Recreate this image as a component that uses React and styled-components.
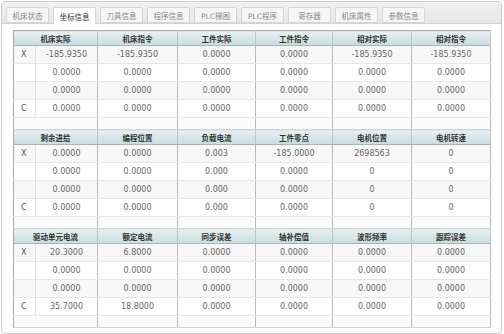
import React from 'react';
import styled, { createGlobalStyle } from 'styled-components';

const GlobalStyle = createGlobalStyle`
	html, body {
		margin: 0;
		padding: 0;
		background: #fff;
	}

	body {
		font-family: "DejaVu Sans", "Noto Sans CJK SC", sans-serif;
	}
`;

const TABS = ['机床状态', '坐标信息', '刀具信息', '程序信息', 'PLC梯图', 'PLC程序', '寄存器', '机床属性', '参数信息'];

const BLOCKS = [
	{
		heads: ['机床实际', '机床指令', '工件实际', '工件指令', '相对实际', '相对指令'],
		rows: [
			['X', '-185.9350', '-185.9350', '0.0000', '0.0000', '-185.9350', '-185.9350'],
			['', '0.0000', '0.0000', '0.0000', '0.0000', '0.0000', '0.0000'],
			['', '0.0000', '0.0000', '0.0000', '0.0000', '0.0000', '0.0000'],
			['C', '0.0000', '0.0000', '0.0000', '0.0000', '0.0000', '0.0000'],
		],
	},
	{
		heads: ['剩余进给', '编程位置', '负载电流', '工件零点', '电机位置', '电机转速'],
		rows: [
			['X', '0.0000', '0.0000', '0.003', '-185.0000', '2698563', '0'],
			['', '0.0000', '0.0000', '0.000', '0.0000', '0', '0'],
			['', '0.0000', '0.0000', '0.000', '0.0000', '0', '0'],
			['C', '0.0000', '0.0000', '0.000', '0.0000', '0', '0'],
		],
	},
	{
		heads: ['驱动单元电流', '额定电流', '同步误差', '轴补偿值', '波形频率', '跟踪误差'],
		rows: [
			['X', '20.3000', '6.8000', '0.0000', '0.0000', '0.0000', '0.0000'],
			['', '0.0000', '0.0000', '0.0000', '0.0000', '0.0000', '0.0000'],
			['', '0.0000', '0.0000', '0.0000', '0.0000', '0.0000', '0.0000'],
			['C', '35.7000', '18.8000', '0.0000', '0.0000', '0.0000', '0.0000'],
		],
	},
];

const COL_WIDTHS = [22, 62, 80, 78, 77, 79, 79];

const Page = styled.div`
	width: 504px;
	height: 334px;
	padding: 1px 2px 2px 1px;
	box-sizing: border-box;
`;

const Panel = styled.div`
	height: 100%;
	border: 1px solid #cdcdcd;
	border-radius: 4px;
	background: #fff;
	display: flex;
	flex-direction: column;
	overflow: hidden;
`;

const TabBar = styled.div`
	display: flex;
	align-items: flex-end;
	gap: 4px;
	height: 21px;
	padding: 0 4px;
	background: linear-gradient(#f0f0f0, #e6e6e6);
	border-bottom: 1px solid #d2d2d2;
`;

const Tab = styled.div`
	width: 43px;
	height: ${p => (p.active ? '17px' : '16px')};
	margin-bottom: ${p => (p.active ? '-1px' : '0')};
	box-sizing: border-box;
	display: flex;
	align-items: center;
	justify-content: center;
	font-size: 7.5px;
	color: ${p => (p.active ? '#333' : '#8a8a8a')};
	background: ${p => (p.active ? '#fff' : '#f5f5f5')};
	border: 1px solid #d6d6d6;
	border-bottom: ${p => (p.active ? 'none' : '1px solid #d6d6d6')};
	border-radius: 2px 2px 0 0;
	white-space: nowrap;
`;

const Body = styled.div`
	flex: 1;
	padding: 6px 11px 0 11px;
`;

const Table = styled.table`
	width: 477px;
	table-layout: fixed;
	border-collapse: collapse;
	border: 1px solid #a9a9a9;
	font-size: 8px;
`;

const HeadCell = styled.th`
	height: 14px;
	padding: 0;
	font-weight: bold;
	font-size: 7.5px;
	color: #333;
	text-align: center;
	background: linear-gradient(#e6f0f1, #cadcdf);
	border-right: 1px solid #b7c9cc;
	border-bottom: 1px solid #a4b8bc;
`;

const Row = styled.tr`
	background: ${p => (p.alt ? '#fff' : '#f7f7f7')};
`;

const Cell = styled.td`
	height: 17px;
	padding: 0;
	text-align: center;
	color: #666;
	border-bottom: 1px solid #e6e6e6;
	border-right: 1px solid ${p => (p.minor ? '#e2e2e2' : '#b9b9b9')};
`;

const AxisCell = styled(Cell)`
	text-align: left;
	padding-left: 7px;
	color: #555;
`;

const SpacerCell = styled.td`
	height: 11px;
	padding: 0;
	background: #fbfbfb;
	border-right: 1px solid #b9b9b9;
	border-bottom: 1px solid #d4d4d4;
`;

const Block = ({ heads, rows }) => (
	<>
		<tr>
			{heads.map((h, i) => (
				<HeadCell key={i} colSpan={i === 0 ? 2 : 1}>{h}</HeadCell>
			))}
		</tr>
		{rows.map((r, i) => (
			<Row key={i} alt={i % 2 === 1}>
				<AxisCell minor>{r[0]}</AxisCell>
				{r.slice(1).map((v, j) => <Cell key={j}>{v}</Cell>)}
			</Row>
		))}
		<tr>
			<SpacerCell colSpan={2} />
			{heads.slice(1).map((h, i) => <SpacerCell key={i} />)}
		</tr>
	</>
);

export default function App() {
	return (
		<Page>
			<GlobalStyle />
			<Panel>
				<TabBar>
					{TABS.map((t, i) => (
						<Tab key={t} active={i === 1}>{t}</Tab>
					))}
				</TabBar>
				<Body>
					<Table>
						<colgroup>
							{COL_WIDTHS.map((w, i) => <col key={i} style={{ width: w }} />)}
						</colgroup>
						<tbody>
							{BLOCKS.map((b, i) => <Block key={i} {...b} />)}
						</tbody>
					</Table>
				</Body>
			</Panel>
		</Page>
	);
}
